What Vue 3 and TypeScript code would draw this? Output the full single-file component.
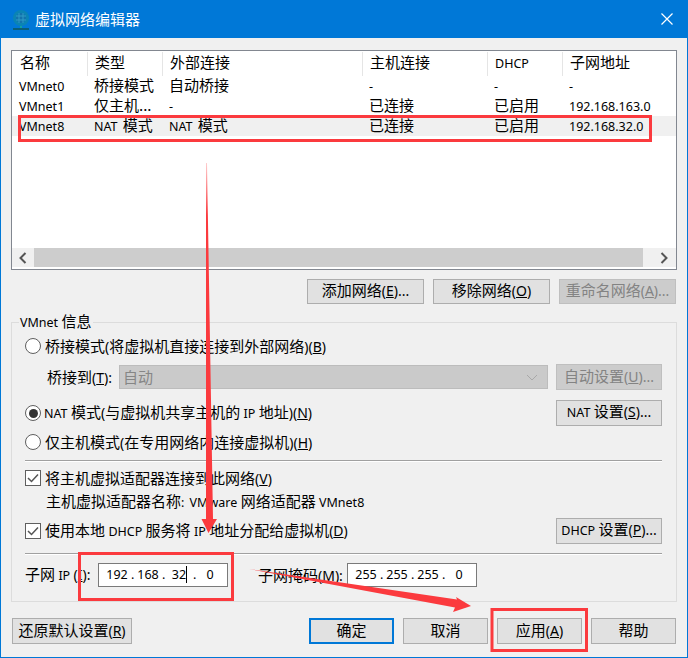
<script setup lang="ts">
const columns: string[] = ['名称', '类型', '外部连接', '主机连接', 'DHCP', '子网地址']
const rows: { cells: string[]; selected?: boolean }[] = [
  { cells: ['VMnet0', '桥接模式', '自动桥接', '-', '-', '-'] },
  { cells: ['VMnet1', '仅主机...', '-', '已连接', '已启用', '192.168.163.0'] },
  { cells: ['VMnet8', 'NAT 模式', 'NAT 模式', '已连接', '已启用', '192.168.32.0'], selected: true },
]
function seg(text: string): { t: string; l: boolean }[] {
  const parts = text.match(/[\x00-\x7f]+|[^\x00-\x7f]+/g) ?? []
  return parts.map((t) => ({ t, l: /^[\x00-\x7f]+$/.test(t) && t !== '...' }))
}
const subnet: string[] = ['192', '168', '32', '0']
const mask: string[] = ['255', '255', '255', '0']
</script>

<template>
  <div class="win">
    <header class="title">
      <svg class="logo" width="18" height="20" viewBox="0 0 18 20">
        <circle cx="9" cy="8" r="8" fill="#0a84b4" />
        <circle cx="9" cy="8" r="5" fill="#1273ad" />
        <path d="M4 6h10M4 10h10M7 3v10M11 3v10" stroke="#2f9cc6" stroke-width="1" />
        <path d="M8 16h2v2H8z" fill="#10a0a0" />
        <path d="M1 18h16v2H1z" fill="#0a5f78" />
      </svg>
      <span class="title-text">虚拟网络编辑器</span>
      <svg class="close" width="12" height="12" viewBox="0 0 12 12">
        <path d="M.5.5l11 11M11.5.5l-11 11" stroke="#fff" stroke-width="1.2" fill="none" />
      </svg>
    </header>

    <main class="body">
      <section class="list">
        <div class="grid head">
          <div v-for="c in columns" :key="c" class="cell">
            <span v-for="s in seg(c)" :key="s.t" :class="{ l: s.l }">{{ s.t }}</span>
          </div>
        </div>
        <div v-for="r in rows" :key="r.cells[0]" class="grid row" :class="{ selected: r.selected }">
          <div v-for="(c, i) in r.cells" :key="i" class="cell">
            <span v-for="s in seg(c)" :key="s.t" :class="{ l: s.l }">{{ s.t }}</span>
          </div>
        </div>
        <div class="spacer"></div>
        <div class="scroll">
          <div class="arrow left">
            <svg width="8" height="12" viewBox="0 0 8 12"><path d="M6.5 1L1.5 6l5 5" stroke="#555" stroke-width="2" fill="none" /></svg>
          </div>
          <div class="thumb"></div>
          <div class="arrow right">
            <svg width="8" height="12" viewBox="0 0 8 12"><path d="M1.5 1l5 5-5 5" stroke="#555" stroke-width="2" fill="none" /></svg>
          </div>
        </div>
      </section>

      <div class="actions">
        <button class="btn w117">添加网络<span class="m">(<u>E</u>)...</span></button>
        <button class="btn w117">移除网络<span class="m">(<u>O</u>)</span></button>
        <button class="btn w117 off">重命名网络<span class="m">(<u>A</u>)...</span></button>
      </div>

      <section class="group">
        <div class="legend"><span class="l">VMnet</span> 信息</div>

        <div class="line r1">
          <span class="radio"></span>
          <span>桥接模式<span class="m">(</span>将虚拟机直接连接到外部网络<span class="m">)(<u>B</u>)</span></span>
        </div>
        <div class="line r2">
          <span class="bridge-label">桥接到<span class="m">(<u>T</u>):</span></span>
          <div class="select">
            <span>自动</span>
            <svg width="12" height="7" viewBox="0 0 12 7"><path d="M1 1l5 5 5-5" stroke="#a8a8a8" stroke-width="1" fill="none" /></svg>
          </div>
          <button class="btn side off">自动设置<span class="m">(<u>U</u>)...</span></button>
        </div>
        <div class="line r3">
          <span class="radio on nat"></span>
          <span class="grow"><span class="l">NAT</span> 模式<span class="m">(</span>与虚拟机共享主机的 <span class="l">IP</span> 地址<span class="m">)(<u>N</u>)</span></span>
          <button class="btn side"><span class="l">NAT</span> 设置<span class="m">(<u>S</u>)...</span></button>
        </div>
        <div class="line r4">
          <span class="radio"></span>
          <span>仅主机模式<span class="m">(</span>在专用网络内连接虚拟机<span class="m">)(<u>H</u>)</span></span>
        </div>
        <div class="sep s1"></div>
        <div class="line r5">
          <span class="check">
            <svg width="12" height="10" viewBox="0 0 12 10"><path d="M1 5l3.5 3.5L11 1.5" stroke="#555" stroke-width="1.5" fill="none" /></svg>
          </span>
          <span>将主机虚拟适配器连接到此网络<span class="m">(<u>V</u>)</span></span>
        </div>
        <div class="line r6">主机虚拟适配器名称<span class="l">: VMware</span> 网络适配器 <span class="l">VMnet8</span></div>
        <div class="line r7">
          <span class="check">
            <svg width="12" height="10" viewBox="0 0 12 10"><path d="M1 5l3.5 3.5L11 1.5" stroke="#555" stroke-width="1.5" fill="none" /></svg>
          </span>
          <span class="grow">使用本地 <span class="l">DHCP</span> 服务将 <span class="l">IP</span> 地址分配给虚拟机<span class="m">(<u>D</u>)</span></span>
          <button class="btn side"><span class="l">DHCP</span> 设置<span class="m">(<u>P</u>)...</span></button>
        </div>
        <div class="sep s2"></div>
        <div class="line r8">
          <span class="ip-label">子网 <span class="l">IP</span> <span class="m">(<u>I</u>):</span></span>
          <div class="ip">
            <template v-for="(o, i) in subnet" :key="i">
              <span class="oct l">{{ o }}<i v-if="i === 2" class="caret"></i></span>
              <span v-if="i < 3" class="dot l">.</span>
            </template>
          </div>
          <span class="mask-label">子网掩码<span class="m">(<u>M</u>):</span></span>
          <div class="ip">
            <template v-for="(o, i) in mask" :key="i">
              <span class="oct l">{{ o }}</span>
              <span v-if="i < 3" class="dot l">.</span>
            </template>
          </div>
        </div>
      </section>

      <footer class="foot">
        <button class="btn restore">还原默认设置<span class="m">(<u>R</u>)</span></button>
        <div class="foot-right">
          <button class="btn w85 primary">确定</button>
          <button class="btn w85">取消</button>
          <button class="btn w85">应用<span class="m">(<u>A</u>)</span></button>
          <button class="btn w85">帮助</button>
        </div>
      </footer>
    </main>

    <svg class="marks" width="688" height="658" viewBox="0 0 688 658">
      <defs>
        <linearGradient id="fade" x1="0" y1="163" x2="0" y2="215" gradientUnits="userSpaceOnUse">
          <stop offset="0" stop-color="#fb3a3e" stop-opacity="0.25" />
          <stop offset="1" stop-color="#fb3a3e" />
        </linearGradient>
      </defs>
      <rect x="19.5" y="116.5" width="631" height="24" class="mark" />
      <rect x="79.5" y="553.5" width="153" height="46" class="mark" />
      <rect x="492" y="609.5" width="94.5" height="41" class="mark" />
      <polygon points="206,163 207,163 213,519 217,519 208.5,533 201.5,519 206,519" fill="url(#fade)" />
      <polygon points="249,569 457,599.5 456,597 471,606 453,612 455,607.5" fill="#fb3a3e" />
    </svg>
  </div>
</template>

<style>
html, body { margin: 0; background: #f0f0f0; }
</style>

<style scoped>
.win {
  position: relative;
  width: 688px;
  height: 658px;
  box-sizing: border-box;
  border: 1px solid #0078d7;
  border-top: 0;
  background: #f0f0f0;
  color: #000;
  font-family: "Noto Sans CJK SC", "Noto Sans", sans-serif;
  font-size: 15px;
  line-height: 20px;
  overflow: hidden;
}
.l { font-family: "Noto Sans", "Noto Sans CJK SC", sans-serif; font-size: 12.5px; word-spacing: 2px; }
.m { font-family: "Noto Sans", "Noto Sans CJK SC", sans-serif; font-size: 14px; }
u { text-underline-offset: 1px; }

.title {
  height: 38px;
  display: flex;
  align-items: center;
  background: #0078d7;
  color: #fff;
  margin: 0 -1px;
  padding: 0 15px 0 12px;
}
.logo { flex: none; margin-top: 2px; }
.title-text { margin-left: 5px; }
.close { margin-left: auto; margin-top: 0; }

.body { padding: 12px 10px 0; }

.list {
  height: 220px;
  box-sizing: border-box;
  border: 1px solid #828790;
  background: #fff;
  display: flex;
  flex-direction: column;
}
.grid {
  display: grid;
  grid-template-columns: 75px 75px 200px 125px 75px 1fr;
  flex: none;
}
.head { height: 25px; padding-top: 1px; box-sizing: border-box; }
.head .cell { line-height: 20px; padding-left: 7px; border-left: 1px solid #e5e5e5; }
.head .cell:first-child { border-left: 0; padding-left: 8px; }
.row { height: 20px; }
.row .cell { padding-left: 7px; white-space: nowrap; line-height: 18px; }
.selected { background: #f0f0f0; }
.spacer { flex: 1; }
.scroll {
  flex: none;
  height: 19px;
  margin-bottom: 2px;
  display: flex;
  background: #f0f0f0;
}
.arrow { display: flex; align-items: center; justify-content: center; }
.arrow.left { width: 22px; }
.arrow.right { width: 33px; padding-left: 9px; box-sizing: border-box; }
.thumb { flex: 1; background: #cdcdcd; }

.actions {
  display: flex;
  justify-content: flex-end;
  gap: 9px;
  margin-top: 9px;
  padding-right: 1px;
}
.btn {
  box-sizing: border-box;
  height: 26px;
  padding: 0 0 2px;
  border: 1px solid #adadad;
  background: #e1e1e1;
  color: #000;
  font: inherit;
  line-height: 20px;
  white-space: nowrap;
}
.w117 { width: 117px; height: 25px; }
.w85 { width: 85px; }
.side { width: 106px; flex: none; }
.off { background: #ccc; border-color: #bfbfbf; color: #838383; }
.primary { border: 2px solid #0078d7; }

.group {
  position: relative;
  height: 280px;
  box-sizing: border-box;
  margin-top: 18px;
  border: 1px solid #dcdcdc;
  padding: 0 14px 0 13px;
  display: flex;
  flex-direction: column;
}
.legend {
  position: absolute;
  top: -12px;
  left: 7px;
  padding: 0 1px;
  background: #f0f0f0;
}
.line { display: flex; align-items: center; white-space: nowrap; flex: none; }
.line > .radio, .line > .check { margin-right: 4px; }
.line > .radio.nat { margin-right: 3px; }
.grow { flex: 1; }
.r1 { margin-top: 13px; height: 20px; }
.r2 { margin-top: 8px; height: 26px; }
.r3 { margin-top: 10px; height: 26px; }
.r4 { margin-top: 6px; height: 20px; }
.s1 { margin-top: 8px; }
.r5 { margin-top: 6px; height: 20px; }
.r6 { margin-top: 3px; height: 20px; padding-left: 21px; display: block; }
.r7 { margin-top: 7px; height: 26px; }
.s2 { margin-top: 9px; }
.r8 { margin-top: 8px; height: 24px; }
.sep {
  flex: none;
  height: 2px;
  box-sizing: border-box;
  border-top: 1px solid #a0a0a0;
  border-bottom: 1px solid #fff;
}
.radio {
  width: 16px;
  height: 16px;
  box-sizing: border-box;
  flex: none;
  border: 1.5px solid #5f5f5f;
  border-radius: 50%;
  background: #fff;
  display: flex;
  align-items: center;
  justify-content: center;
}
.radio.on::after {
  content: "";
  width: 9px;
  height: 9px;
  border-radius: 50%;
  background: #333;
}
.check {
  width: 16px;
  height: 16px;
  box-sizing: border-box;
  flex: none;
  border: 1px solid #5f5f5f;
  background: #fff;
  display: flex;
  align-items: center;
  justify-content: center;
}
.bridge-label { width: 94px; padding-left: 22px; box-sizing: border-box; flex: none; }
.select {
  flex: 1;
  height: 24px;
  box-sizing: border-box;
  margin-right: 8px;
  padding: 0 9px 0 3px;
  border: 1px solid #bcbcbc;
  background: #cacaca;
  color: #868686;
  display: flex;
  align-items: center;
  justify-content: space-between;
}
.ip-label { width: 73px; box-sizing: border-box; flex: none; }
.mask-label { width: 89px; margin-left: 30px; flex: none; }
.ip {
  width: 130px;
  height: 24px;
  box-sizing: border-box;
  flex: none;
  padding-left: 6px;
  border: 1px solid #7a7a7a;
  background: #fff;
  display: flex;
  align-items: center;
}
.oct { position: relative; width: 24px; text-align: center; }
.dot { width: 7px; padding-left: 2px; box-sizing: border-box; }
.caret {
  position: absolute;
  right: 4px;
  top: 1px;
  width: 1px;
  height: 17px;
  background: #000;
}

.foot {
  display: flex;
  justify-content: space-between;
  margin-top: 16px;
  padding: 0 1px;
}
.restore { width: 120px; }
.foot-right { display: flex; gap: 9px; }

.marks { position: absolute; left: -1px; top: 0; pointer-events: none; }
.mark { fill: none; stroke: #fb3a3e; stroke-width: 3; }
</style>
